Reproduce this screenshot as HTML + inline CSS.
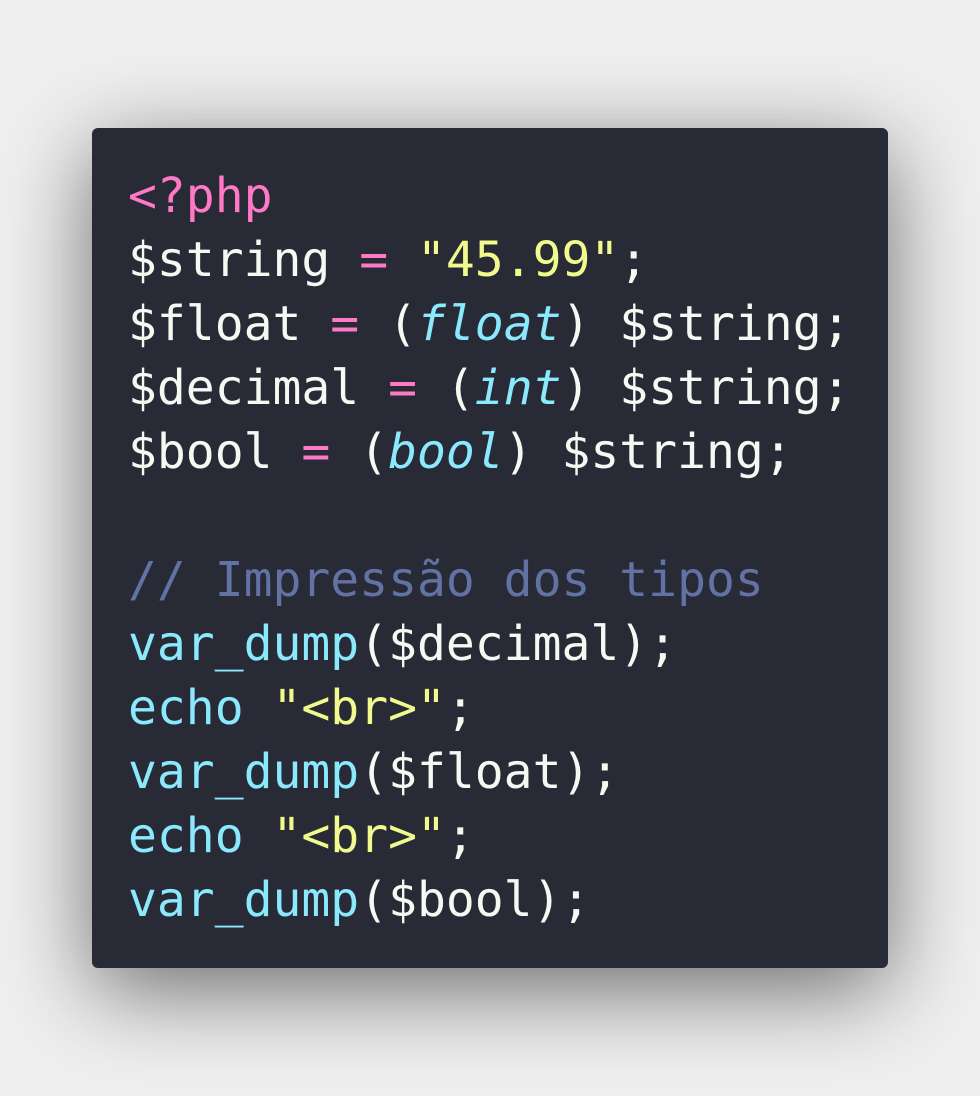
<!DOCTYPE html>
<html><head><meta charset="utf-8"><style>
html,body{margin:0;padding:0;width:980px;height:1096px;overflow:hidden;background:#efefef;}
.card{position:absolute;left:92px;top:128px;width:796px;height:840px;background:#282a36;border-radius:6px;box-shadow:0 22px 90px rgba(0,0,0,0.55);}
pre{margin:0;position:absolute;left:36px;top:36px;font-family:"DejaVu Sans Mono","Liberation Mono",monospace;font-size:48px;line-height:64px;color:#f8f8f2;}
.k{color:#ff79c6}.s{color:#f1fa8c}.c{color:#8be9fd}.i{color:#8be9fd;font-style:italic}.m{color:#6272a4}
</style></head><body>
<div class="card"><pre><span class="k">&lt;?php</span>
$string <span class="k">=</span> <span class="s">"45.99"</span>;
$float <span class="k">=</span> (<span class="i">float</span>) $string;
$decimal <span class="k">=</span> (<span class="i">int</span>) $string;
$bool <span class="k">=</span> (<span class="i">bool</span>) $string;

<span class="m">// Impressão dos tipos</span>
<span class="c">var_dump</span>($decimal);
<span class="c">echo</span> <span class="s">"&lt;br&gt;"</span>;
<span class="c">var_dump</span>($float);
<span class="c">echo</span> <span class="s">"&lt;br&gt;"</span>;
<span class="c">var_dump</span>($bool);</pre></div>
</body></html>
